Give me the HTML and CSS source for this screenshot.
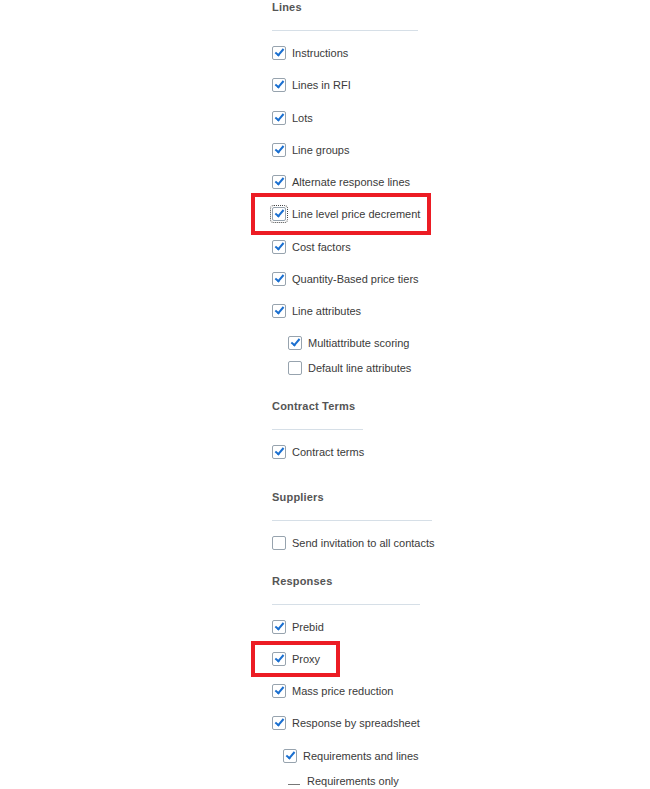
FILE: index.html
```html
<!DOCTYPE html>
<html lang="en">
<head>
  <meta charset="UTF-8" />
  <meta name="viewport" content="width=device-width, initial-scale=1.0" />
  <title>Negotiation Features</title>
  <link rel="stylesheet" href="styles.css">
</head>
<body>

  <div class="panel">

    <div class="section section-lines">
      <div class="section-title">Lines</div>
      <div class="rule rule-lines"></div>

      <label class="row"><span class="box checked"></span>Instructions</label>
      <label class="row"><span class="box checked"></span>Lines in RFI</label>
      <label class="row"><span class="box checked"></span>Lots</label>
      <label class="row"><span class="box checked"></span>Line groups</label>
      <label class="row"><span class="box checked"></span>Alternate response lines</label>
      <label class="row">
        <span class="box checked focused"></span>Line level price decrement
        <span class="highlight highlight-wide"></span>
      </label>
      <label class="row"><span class="box checked"></span>Cost factors</label>
      <label class="row"><span class="box checked"></span>Quantity-Based price tiers</label>
      <label class="row"><span class="box checked"></span>Line attributes</label>

      <div class="sub-list">
        <label class="sub-row"><span class="box checked"></span>Multiattribute scoring</label>
        <label class="sub-row"><span class="box"></span>Default line attributes</label>
      </div>
    </div>

    <div class="section section-contract">
      <div class="section-title">Contract Terms</div>
      <div class="rule rule-contract"></div>
      <label class="row"><span class="box checked"></span>Contract terms</label>
    </div>

    <div class="section section-suppliers">
      <div class="section-title">Suppliers</div>
      <div class="rule rule-suppliers"></div>
      <label class="row"><span class="box"></span>Send invitation to all contacts</label>
    </div>

    <div class="section section-responses">
      <div class="section-title">Responses</div>
      <div class="rule rule-responses"></div>

      <label class="row"><span class="box checked"></span>Prebid</label>
      <label class="row">
        <span class="box checked"></span>Proxy
        <span class="highlight highlight-proxy"></span>
      </label>
      <label class="row"><span class="box checked"></span>Mass price reduction</label>
      <label class="row"><span class="box checked"></span>Response by spreadsheet</label>

      <div class="sub-list sub-list-narrow">
        <label class="sub-row"><span class="box checked"></span>Requirements and lines</label>
        <div class="sub-row radio-row"><span class="dash"></span>Requirements only</div>
      </div>
    </div>

  </div>

</body>
</html>
```

FILE: styles.css
```css
body {
  font-family: "Liberation Sans", Arial, sans-serif;
  font-size: 11px;
  color: #3a3a3a;
  background: #fff;
  margin: 0;
}

.panel {
  padding-left: 272px;
}

/* Section headers */
.section-title {
  font-weight: bold;
  color: #555;
  line-height: 14px;
  height: 14px;
  letter-spacing: 0.2px;
}

.section-contract {
  margin-top: 19px;
}

.section-suppliers {
  margin-top: 22px;
}

.section-responses {
  margin-top: 15px;
}

.rule {
  height: 1px;
  background: #d6dfe7;
  margin-top: 16px;
  margin-bottom: 6px;
}

.rule-lines { width: 146px; }
.rule-contract { width: 91px; }
.rule-suppliers { width: 160px; }
.rule-responses { width: 148px; }

/* Checkbox rows */
.row,
.sub-row {
  position: relative;
  display: flex;
  align-items: center;
  height: 32px;
  cursor: pointer;
}

.section-lines .row {
  height: 32.25px;
}

.sub-list {
  margin-top: 3px;
  padding-left: 16px;
}

.sub-list-narrow {
  margin-top: 4px;
  padding-left: 11px;
}

.sub-row,
.section-lines .sub-row {
  height: 25px;
}

.box {
  position: relative;
  box-sizing: border-box;
  width: 14px;
  height: 14px;
  margin-right: 6px;
  border: 1px solid #97a3ae;
  border-radius: 2px;
  background: #fff;
  flex-shrink: 0;
}

.box.checked::after {
  content: "";
  position: absolute;
  left: 4px;
  top: 0px;
  width: 3px;
  height: 7px;
  border: solid #1a6fd0;
  border-width: 0 2px 2px 0;
  transform: rotate(40deg);
}

.box.focused {
  outline: 1px dotted #444;
  outline-offset: 1px;
}

/* Radio-like dash row */
.radio-row {
  cursor: default;
}

.dash {
  width: 12px;
  height: 1px;
  background: #777;
  margin: 8px 7px 0 5px;
}

/* Red annotation boxes */
.highlight {
  position: absolute;
  left: -21px;
  border: 4px solid #ec1c24;
  box-sizing: border-box;
  pointer-events: none;
}

.highlight-wide {
  top: -5px;
  width: 180px;
  height: 42px;
}

.highlight-proxy {
  top: -2px;
  width: 89px;
  height: 36px;
}
```
